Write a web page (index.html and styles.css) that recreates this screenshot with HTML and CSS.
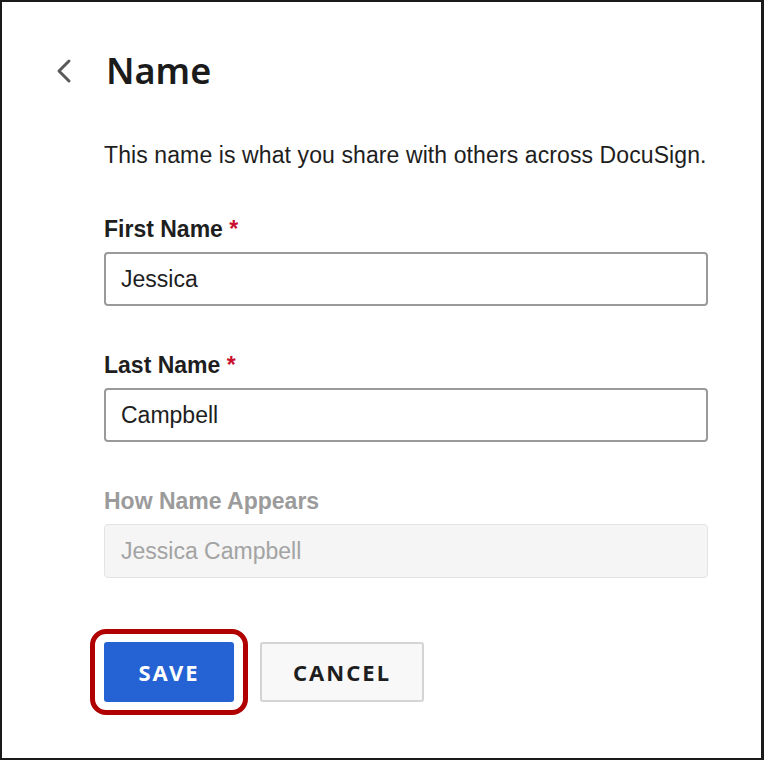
FILE: index.html
```html
<!DOCTYPE html>
<html lang="en">
<head>
    <meta charset="UTF-8">
    <meta name="viewport" content="width=device-width, initial-scale=1.0">
    <title>Name</title>
    <link rel="stylesheet" href="styles.css">
</head>
<body>
    <div class="frame">
        <div class="header">
            <button class="back" aria-label="Back">
                <svg width="20" height="26" viewBox="0 0 20 26">
                    <path d="M14 3 L4 13 L14 23" fill="none" stroke="#5a5a5a" stroke-width="3" stroke-linecap="round" stroke-linejoin="round"/>
                </svg>
            </button>
            <h1>Name</h1>
        </div>

        <div class="content">
            <p class="intro">This name is what you share with others across DocuSign.</p>

            <div class="field">
                <label for="first">First Name <span class="req">*</span></label>
                <input id="first" class="text-input" type="text" value="Jessica">
            </div>

            <div class="field">
                <label for="last">Last Name <span class="req">*</span></label>
                <input id="last" class="text-input" type="text" value="Campbell">
            </div>

            <div class="field field-disabled">
                <label for="full">How Name Appears</label>
                <input id="full" class="text-input" type="text" value="Jessica Campbell" disabled>
            </div>

            <div class="actions">
                <div class="highlight">
                    <button class="btn btn-primary">SAVE</button>
                </div>
                <button class="btn btn-secondary">CANCEL</button>
            </div>
        </div>
    </div>
</body>
</html>
```

FILE: styles.css
```css
html, body {
    margin: 0;
    background: #fff;
}

.frame {
    box-sizing: border-box;
    width: 764px;
    height: 760px;
    border: 2px solid #1a1a1a;
    border-right-width: 3px;
    padding: 47px 0 0 53px;
    font-family: "Liberation Sans", Arial, sans-serif;
    color: #1e1e1e;
}

.header {
    display: flex;
    align-items: center;
}

.back {
    width: 51px;
    height: 44px;
    padding: 0;
    border: 0;
    background: none;
    display: flex;
    align-items: center;
    justify-content: flex-start;
}

.header h1 {
    margin: 0;
    font-family: "Noto Sans", sans-serif;
    font-weight: 600;
    font-size: 36px;
    line-height: 44px;
    color: #1b1b1b;
}

.content {
    width: 604px;
    margin-left: 49px;
}

.intro {
    margin: 48px 0 46px;
    font-size: 23px;
    line-height: 28px;
    letter-spacing: 0.1px;
    white-space: nowrap;
}

.field {
    margin-bottom: 45px;
}

.field label {
    display: block;
    font-weight: bold;
    font-size: 23px;
    line-height: 28px;
    margin-bottom: 9px;
}

.req {
    color: #c8102e;
}

.text-input {
    box-sizing: border-box;
    display: block;
    width: 100%;
    height: 54px;
    padding: 0 15px;
    border: 2px solid #9a9a9a;
    border-radius: 4px;
    background: #fff;
    font-family: "Liberation Sans", Arial, sans-serif;
    font-size: 23px;
    color: #1e1e1e;
}

.field-disabled {
    margin-bottom: 64px;
}

.field-disabled label {
    color: #9b9b9b;
}

.field-disabled .text-input {
    border: 1px solid #e3e3e3;
    padding-left: 16px;
    background: #f5f5f5;
    color: #a3a3a3;
}

.actions {
    display: flex;
    align-items: center;
    gap: 26px;
}

.highlight {
    position: relative;
}

.highlight::after {
    content: "";
    position: absolute;
    top: -13px;
    bottom: -13px;
    left: -14px;
    right: -14px;
    border: 5px solid #b00000;
    border-radius: 16px;
}

.btn {
    box-sizing: border-box;
    height: 60px;
    border-radius: 3px;
    font-family: "Noto Sans", sans-serif;
    font-weight: 700;
    font-size: 22px;
    letter-spacing: 2px;
    cursor: pointer;
}

.btn-primary {
    display: block;
    width: 130px;
    border: 0;
    background: #2563d4;
    color: #fff;
}

.btn-secondary {
    width: 164px;
    border: 2px solid #d4d4d4;
    background: #f8f8f8;
    color: #1e1e1e;
}
```
